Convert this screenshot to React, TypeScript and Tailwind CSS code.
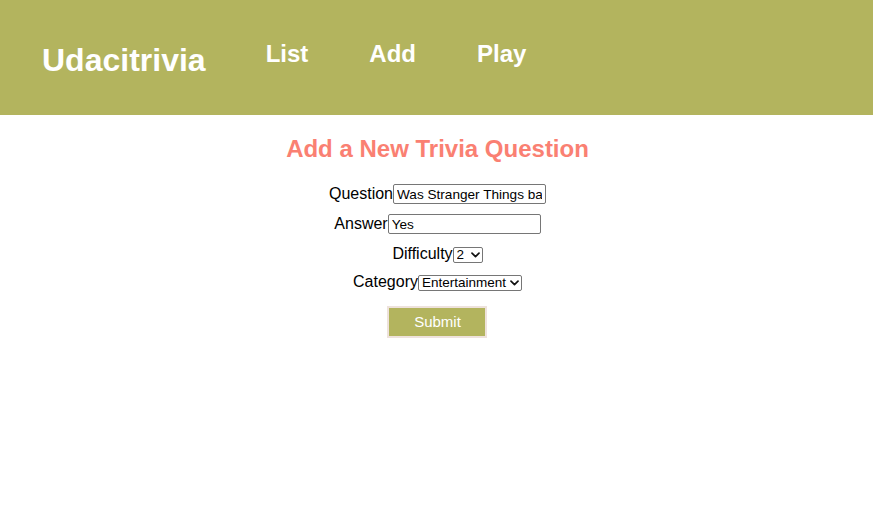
import React from "react";

const font = { fontFamily: '"Liberation Sans", Arial, Helvetica, sans-serif' };

function Chevron() {
  return (
    <svg
      className="pointer-events-none absolute right-[3px] top-1/2 -translate-y-1/2"
      width="9"
      height="6"
      viewBox="0 0 9 6"
      fill="none"
    >
      <path d="M1 1.2 L4.5 4.6 L8 1.2" stroke="#111" strokeWidth="1.7" strokeLinecap="round" strokeLinejoin="round" />
    </svg>
  );
}

export default function App() {
  return (
    <div className="min-h-[523px] w-full bg-white text-black" style={font}>
      <header className="flex h-[115px] items-start bg-[#b3b45e] pl-[42px] text-white">
        <h1 className="mt-[44px] text-[32px] font-bold leading-none">Udacitrivia</h1>
        <nav className="ml-[60px] flex gap-[61px]">
          <h2 className="mt-[42px] text-[24px] font-bold leading-none">List</h2>
          <h2 className="mt-[42px] text-[24px] font-bold leading-none">Add</h2>
          <h2 className="mt-[42px] text-[24px] font-bold leading-none">Play</h2>
        </nav>
      </header>

      <main className="flex flex-col items-center pl-[2px]">
        <h2 className="mt-[22px] text-[24px] font-bold leading-none text-[#fa8072]">
          Add a New Trivia Question
        </h2>
        <form className="flex flex-col items-center" onSubmit={(e) => e.preventDefault()}>
          <label className="mt-[23px] flex items-baseline text-[16px] leading-none">
            Question
            <input
              type="text"
              defaultValue="Was Stranger Things based on a true story?"
              className="h-[20px] w-[153px] rounded-[2px] border border-[#767676] bg-white px-[3px] py-0 text-[13.6px] text-black outline-none"
              style={font}
            />
          </label>
          <label className="mt-[10px] flex items-baseline text-[16px] leading-none">
            Answer
            <input
              type="text"
              defaultValue="Yes"
              className="h-[20px] w-[153px] rounded-[2px] border border-[#767676] bg-white px-[3px] py-0 text-[13.6px] text-black outline-none"
              style={font}
            />
          </label>
          <label className="mt-[12px] flex items-baseline text-[16px] leading-none">
            Difficulty
            <span className="relative inline-flex">
              <select
                defaultValue="2"
                className="h-[16px] w-[30px] appearance-none rounded-[2px] border border-[#767676] bg-white py-0 pl-[3px] pr-0 text-[13.5px] leading-none text-black outline-none"
                style={font}
              >
                <option>1</option>
                <option>2</option>
                <option>3</option>
                <option>4</option>
                <option>5</option>
              </select>
              <Chevron />
            </span>
          </label>
          <label className="mt-[11px] flex items-baseline text-[16px] leading-none">
            Category
            <span className="relative inline-flex">
              <select
                defaultValue="Entertainment"
                className="h-[16px] w-[104px] appearance-none rounded-[2px] border border-[#767676] bg-white py-0 pl-[3px] pr-0 text-[13.5px] leading-none text-black outline-none"
                style={font}
              >
                <option>Science</option>
                <option>Art</option>
                <option>Geography</option>
                <option>History</option>
                <option>Entertainment</option>
                <option>Sports</option>
              </select>
              <Chevron />
            </span>
          </label>
          <button
            type="submit"
            className="mt-[15px] h-[32px] w-[100px] border-2 border-[#eee2dc] bg-[#b3b45e] pt-[1px] text-[15px] text-white"
            style={font}
          >
            Submit
          </button>
        </form>
      </main>
    </div>
  );
}
